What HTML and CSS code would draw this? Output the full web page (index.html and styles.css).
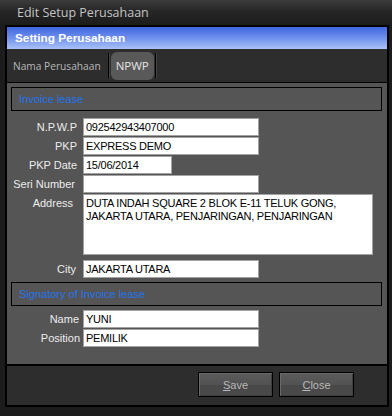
FILE: index.html
```html
<!DOCTYPE html>
<html>
<head>
<meta charset="utf-8">
<link rel="stylesheet" href="styles.css">
</head>
<body>
<div class="titlebar">Edit Setup Perusahaan</div>
<div class="window">
  <div class="header">Setting Perusahaan</div>
  <div class="tabs">
    <div class="tab">Nama Perusahaan</div>
    <div class="sep"></div>
    <div class="tab active">NPWP</div>
    <div class="sep"></div>
  </div>
  <div class="panel">
    <div class="group">Invoice lease</div>
    <div class="form first">
      <div class="row"><div class="lbl">N.P.W.P</div><div class="field">092542943407000</div></div>
      <div class="row"><div class="lbl">PKP</div><div class="field">EXPRESS DEMO</div></div>
      <div class="row"><div class="lbl">PKP Date</div><div class="field short">15/06/2014</div></div>
      <div class="row"><div class="lbl lbl-seri">Seri Number</div><div class="field"></div></div>
      <div class="row tall"><div class="lbl lbl-addr">Address</div><div class="field area">DUTA INDAH SQUARE 2 BLOK E-11 TELUK GONG,<br>JAKARTA UTARA, PENJARINGAN, PENJARINGAN</div></div>
      <div class="row city"><div class="lbl lbl-city">City</div><div class="field">JAKARTA UTARA</div></div>
    </div>
    <div class="group">Signatory of Invoice lease</div>
    <div class="form second">
      <div class="row"><div class="lbl lbl-name">Name</div><div class="field">YUNI</div></div>
      <div class="row pos"><div class="lbl lbl-pos">Position</div><div class="field">PEMILIK</div></div>
    </div>
  </div>
  <div class="footer">
    <button class="btn"><u>S</u>ave</button>
    <button class="btn"><u>C</u>lose</button>
  </div>
</div>
</body>
</html>
```

FILE: styles.css
```css
* { box-sizing: border-box; }
html, body {
  margin: 0;
  padding: 0;
}
body {
  width: 392px;
  height: 416px;
  background: #1c1c1c;
  overflow: hidden;
  font-family: "Liberation Sans", Arial, sans-serif;
}
.titlebar {
  height: 25px;
  padding-left: 17px;
  line-height: 26px;
  font-family: "Open Sans", sans-serif;
  font-size: 12.5px;
  color: #c4c4c4;
  background: linear-gradient(#3c3c3c 0%, #262626 45%, #1c1c1c 100%);
}
.window {
  margin-left: 5px;
  width: 384px;
  border: 2px solid #000;
  background: #2d2d2d;
}
.header {
  height: 22px;
  padding-left: 8px;
  line-height: 22px;
  font-weight: bold;
  font-size: 11.8px;
  color: #fff;
  background: linear-gradient(#3f66e0 0%, #6f90ec 50%, #aac2f8 100%);
}
.tabs {
  height: 34px;
  display: flex;
  align-items: center;
  padding-left: 6px;
  border-bottom: 1px solid #000;
  background: #2d2d2d;
}
.tab {
  font-family: "Open Sans", sans-serif;
  font-size: 10.2px;
  color: #b8b8b8;
}
.tab.active {
  height: 28px;
  line-height: 28px;
  padding: 0 5px;
  margin: 0 1px 0 2px;
  border-radius: 6px;
  background: #595959;
  color: #e4e4e4;
  font-size: 11.5px;
}
.sep {
  width: 1px;
  height: 25px;
  background: #000;
  box-shadow: 1px 0 0 #444;
}
.tab:first-child { margin-right: 7px; }
.panel {
  height: 283px;
  padding: 4px 5px 0 4px;
  background: #555;
  border-bottom: 2px solid #000;
}
.group {
  height: 24px;
  border: 1px solid #000;
  padding-left: 7px;
  line-height: 22px;
  font-size: 11px;
  color: #2474ee;
}
.form.first { margin-top: 7px; margin-bottom: 4px; }
.form.second { margin-top: 4px; }
.row {
  display: flex;
  align-items: center;
  height: 18px;
  margin-bottom: 1px;
}
.row.tall {
  height: 61px;
  align-items: flex-start;
}
.row.city { margin-top: 5px; }
.row.pos { margin-top: 1px; }
.lbl {
  width: 66px;
  margin-right: 6px;
  text-align: right;
  font-size: 11px;
  color: #ececec;
  white-space: nowrap;
}
.lbl-seri { padding-right: 2px; }
.lbl-addr { padding-right: 4px; margin-top: 3px; line-height: 13px; }
.lbl-city { padding-right: 1px; }
.lbl-name { margin-right: 4px; width: 68px; }
.lbl-pos { margin-right: 3px; width: 69px; }
.field {
  width: 176px;
  height: 18px;
  background: #fff;
  border: 1px solid #a2a2a2;
  padding-left: 2px;
  font-size: 11px;
  letter-spacing: -0.25px;
  line-height: 16px;
  color: #000;
  white-space: nowrap;
}
.field.short { width: 89px; }
.field.area {
  width: 290px;
  height: 61px;
  padding-top: 2px;
  line-height: 13px;
}
.footer {
  height: 39px;
  display: flex;
  justify-content: flex-end;
  align-items: flex-start;
  gap: 6px;
  padding: 6px 33px 0 0;
  background: #2d2d2d;
}
.btn {
  width: 75px;
  height: 25px;
  margin: 0;
  padding: 0;
  border: 1px solid #000;
  background: linear-gradient(#5c5c5c 0%, #525252 50%, #484848 51%, #4a4a4a 100%);
  box-shadow: inset 1px 1px 0 #6a6a6a, inset -1px -1px 0 #3e3e3e;
  font-family: "Liberation Sans", Arial, sans-serif;
  font-size: 11px;
  color: #b8b8b8;
}
```
